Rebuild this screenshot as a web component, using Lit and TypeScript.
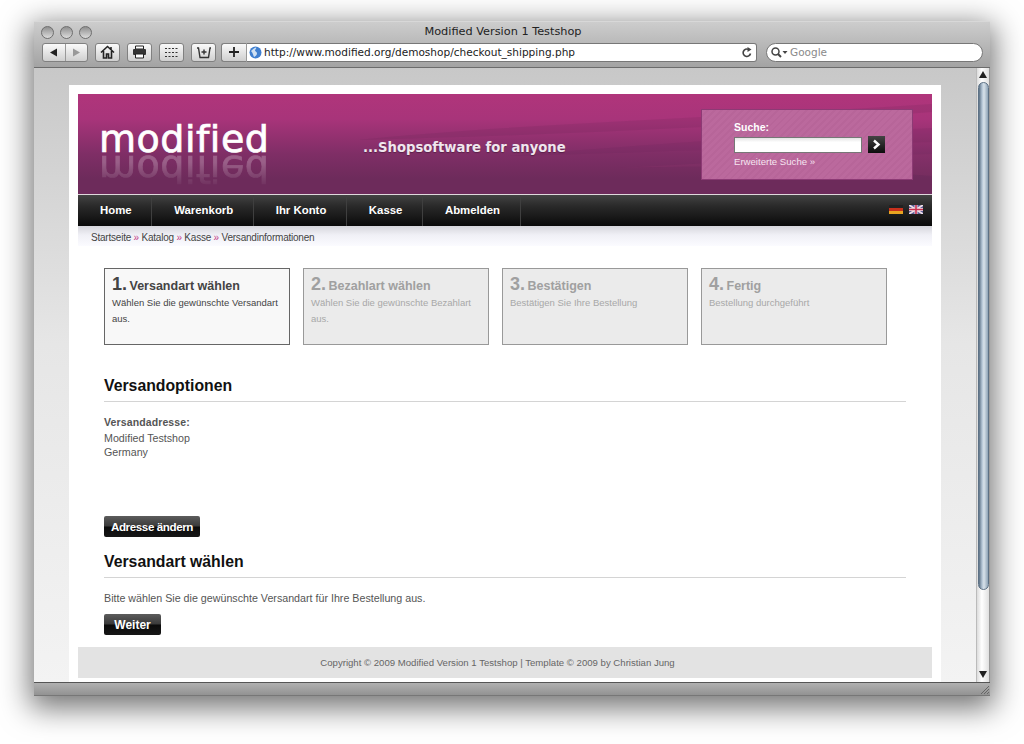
import { LitElement, html, css, svg } from "lit";
import { customElement } from "lit/decorators.js";

const steps = [
  { n: "1.", t: "Versandart wählen", d: "Wählen Sie die gewünschte Versandart aus.", on: true },
  { n: "2.", t: "Bezahlart wählen", d: "Wählen Sie die gewünschte Bezahlart aus.", on: false },
  { n: "3.", t: "Bestätigen", d: "Bestätigen Sie Ihre Bestellung", on: false },
  { n: "4.", t: "Fertig", d: "Bestellung durchgeführt", on: false },
];
const nav = ["Home", "Warenkorb", "Ihr Konto", "Kasse", "Abmelden"];

@customElement("app-root")
export class AppRoot extends LitElement {
  static styles = css`
    :host { display: block; width: 1024px; height: 744px; overflow: hidden; background: #fff; box-sizing: border-box; padding: 21px 0 0 34px; font-family: "Liberation Sans", Arial, sans-serif; }
    * { box-sizing: border-box; }
    .win { width: 956px; height: 675px; display: flex; flex-direction: column; box-shadow: 0 8px 28px 4px rgba(0,0,0,.55); }
    .chrome { height: 47px; flex: none; background: linear-gradient(#cdcdcd, #a3a3a3); border-bottom: 1px solid #6c6c6c; border-top: 1px solid #d8d8d8; position: relative; }
    .titlerow { height: 20px; display: flex; align-items: center; padding-left: 7px; gap: 6px; position: relative; }
    .light { width: 13px; height: 13px; border-radius: 50%; border: 1px solid #6e6e6e; background: linear-gradient(#8f8f8f, #dcdcdc); }
    .title { position: absolute; left: 0; right: 0; top: 3px; text-align: center; font: 11.3px "DejaVu Sans", sans-serif; color: #222; padding-right: 18px; }
    .toolrow { display: flex; align-items: center; height: 20px; padding-left: 8px; }
    .btn { height: 19px; border: 1px solid #808080; border-radius: 3px; background: linear-gradient(#fafafa, #cfcfcf); display: flex; align-items: center; justify-content: center; flex: none; }
    .back { width: 46px; padding: 0; gap: 0; margin-right: 7px; }
    .back span { flex: 1; height: 100%; display: flex; align-items: center; justify-content: center; }
    .back span + span { border-left: 1px solid #999; }
    .i1 { width: 25px; margin-right: 7px; }
    .i1.last { margin-right: 5px; }
    .add { width: 25px; border-radius: 3px 0 0 3px; border-right: none; }
    .url { width: 511px; height: 19px; background: #fff; border: 1px solid #777; border-left: 1px solid #999; border-radius: 0 3px 3px 0; display: flex; align-items: center; padding: 0 4px 0 2px; font: 10.55px "DejaVu Sans", sans-serif; color: #222; flex: none; gap: 2px; }
    .url .u { flex: 1; white-space: nowrap; }
    .search { width: 217px; height: 19px; margin-left: 9px; background: #fff; border: 1px solid #777; border-radius: 10px; display: flex; align-items: center; padding-left: 4px; gap: 2px; font: 10.5px "DejaVu Sans", sans-serif; color: #8a8a8a; flex: none; }
    .mid { flex: 1; display: flex; min-height: 0; }
    .view { width: 942px; background: linear-gradient(#c8c8c8, #e6e6e6 45%, #f3f3f3); padding: 17px 0 0 35px; overflow: hidden; }
    .page { width: 872px; height: 597px; background: #fff; padding: 9px 9px 0; }
    .head { height: 100px; background: linear-gradient(#b0357b, #a8347a 25%, #7f2e66 60%, #6d2b5b 85%); display: flex; align-items: flex-start; position: relative; overflow: hidden; }
    .streaks { position: absolute; inset: 0; width: 100%; height: 100%; }
    .logo { position: relative; margin: 23px 0 0 21px; width: 264px; font: 38px/44px "DejaVu Sans", sans-serif; color: #fff; letter-spacing: .5px; -webkit-text-stroke: .7px #fff; }
    .logo::after { content: "modified"; position: absolute; left: 0; top: 30px; color: #fff; transform: scaleY(-1); opacity: .24; -webkit-mask-image: linear-gradient(transparent 5%, #000 65%); mask-image: linear-gradient(transparent 5%, #000 65%); }
    .slogan { position: relative; margin-top: 44px; font: bold 13.2px/20px "DejaVu Sans", sans-serif; color: #f0e6ee; white-space: nowrap; width: 338px; text-shadow: 0 1px 1px rgba(0,0,0,.3); }
    .sbox { position: relative; margin-top: 15px; width: 212px; height: 71px; background: repeating-linear-gradient(135deg, #bb699d 0 3px, #b76599 3px 5px); border: 1px solid #8d3a75; padding: 11px 0 0 32px; color: #fff; font-size: 10px; }
    .sbox b { display: block; font-size: 10.5px; line-height: 12px; margin-bottom: 3px; }
    .srow { display: flex; align-items: center; gap: 6px; margin-bottom: 3px; }
    .sin { width: 128px; height: 16px; background: linear-gradient(#e4e4e4, #fff 30%); border: 1px solid #777; }
    .go { width: 17px; height: 17px; background: linear-gradient(#444, #0c0c0c); display: flex; align-items: center; justify-content: center; }
    .sbox a { font-size: 9.6px; line-height: 12px; color: #f6e4f0; display: block; }
    .nav { height: 32px; border-top: 1px solid #e0d8dc; background: linear-gradient(#434343, #2a2a2a 35%, #0a0a0a); display: flex; align-items: center; position: relative; }
    .nav a { height: 100%; padding: 0 19.5px 2px 22px; display: flex; align-items: center; border-right: 1px solid #3f3f3f; color: #fff; font-weight: bold; font-size: 11.4px; white-space: nowrap; }
    .flags { margin-left: auto; margin-right: 9px; display: flex; gap: 6px; padding-bottom: 2px; }
    .crumb { height: 20px; background: linear-gradient(#d6d6dc, #f0f0f6 45%, #fbfbff); padding: 1px 0 0 13px; font-size: 10px; line-height: 22px; color: #444; letter-spacing: -.22px; white-space: nowrap; overflow: hidden; }
    .crumb i { font-style: normal; color: #c33a86; }
    .content { padding: 22px 26px 0; }
    .steps { display: flex; gap: 13px; }
    .step { width: 186px; height: 77px; border: 1px solid #999; background: #ebebeb; padding: 5px 4px 5px 7px; color: #a8a8a8; font-size: 9.5px; line-height: 16px; }
    .step.on { border-color: #666; background: #f8f8f8; color: #444; }
    .step .t { display: block; font-size: 12.5px; font-weight: bold; line-height: 21px; color: #a0a0a0; white-space: nowrap; margin-bottom: -2px; }
    .step .t em { font-style: normal; font-size: 18px; margin-right: -1px; }
    .step.on .t { color: #444; }
    h2 { margin: 0; font-size: 15.8px; line-height: 20px; font-weight: bold; color: #111; padding-bottom: 5px; border-bottom: 1px solid #d4d4d4; }
    .h1 { margin-top: 31px; }
    .addr { margin-top: 13px; font-size: 10.7px; line-height: 13.5px; color: #555; }
    .addr b { display: block; font-size: 10.5px; line-height: 14px; margin-bottom: 3px; letter-spacing: .12px; }
    .cta { display: flex; align-items: center; justify-content: center; height: 21px; border-radius: 2px; background: linear-gradient(#5c5c5c, #3a3a3a 48%, #0b0b0b 52%, #161616); color: #fff; font-weight: bold; font-size: 12px; }
    .a1 { width: 96px; margin-top: 57px; font-size: 11.6px; letter-spacing: -.4px; }
    .h2 { margin-top: 15px; }
    p { margin: 14px 0 9px; font-size: 10.7px; line-height: 13px; color: #555; }
    .a2 { width: 57px; }
    .foot { margin-top: 12px; height: 31px; padding-right: 15px; background: #e3e3e3; text-align: center; font-size: 9.6px; line-height: 31px; color: #666; }
    .sb { width: 14px; background: linear-gradient(90deg, #dcdcdc, #fff 40%, #e0e0e0); border-left: 1px solid #bbb; border-right: 1px solid #999; display: flex; flex-direction: column; align-items: center; padding-top: 3px; }
    .thumb { width: 11px; height: 508px; margin-top: 4px; border-radius: 6px; background: linear-gradient(90deg, #5a6f83, #b5c6d6 35%, #d8e2ea 55%, #8ea3b6); border: 1px solid #5d7185; flex: none; }
    .arrow { flex: none; }
    .sp { flex: 1; }
    .ad { margin-bottom: 4px; }
    .status { height: 14px; flex: none; background: linear-gradient(#b0b0b0, #929292); border-top: 1px solid #555; border-bottom: 1px solid #777; position: relative; }
    .grip { position: absolute; right: 0; bottom: 0; }
  `;

  private streaks() {
    return svg`<svg class="streaks" viewBox="0 0 854 100" preserveAspectRatio="none">
      <path d="M280 46 C430 30 640 24 854 10 V18 C650 34 440 42 280 46Z" fill="#5e2350" opacity=".14"/>
      <path d="M430 62 C600 48 720 40 854 34 V48 C720 52 580 58 430 62Z" fill="#5e2350" opacity=".12"/>
      <path d="M540 74 C660 70 760 74 854 82 V60 C760 62 650 68 540 74Z" fill="#d04a92" opacity=".08"/>
    </svg>`;
  }

  render() {
    return html`<div class="win">
      <div class="chrome">
        <div class="titlerow">
          <span class="light"></span><span class="light"></span><span class="light"></span>
          <span class="title">Modified Version 1 Testshop</span>
        </div>
        <div class="toolrow">
          <div class="btn back">
            <span><svg width="9" height="9" viewBox="0 0 9 9"><path d="M1 4.500 8 .5v8z" fill="#222"/></svg></span>
            <span><svg width="9" height="9" viewBox="0 0 9 9"><path d="M8 4.500 1 .5v8z" fill="#999"/></svg></span>
          </div>
          <div class="btn i1"><svg width="15" height="14" viewBox="0 0 15 14"><path d="M1 7.500 7.500 1.500 14 7.500M3.500 6v7h3V9h2v4h3V6M11 2v2.500" fill="none" stroke="#222" stroke-width="1.600"/></svg></div>
          <div class="btn i1"><svg width="15" height="14" viewBox="0 0 15 14"><path d="M3.500 1h8v3h-8z" fill="#fff" stroke="#222"/><rect x="1" y="4" width="13" height="6" rx="1" fill="#333"/><path d="M3.500 9h8v4h-8z" fill="#fff" stroke="#222"/></svg></div>
          <div class="btn i1"><svg width="13" height="9" viewBox="0 0 13 9" fill="#333"><path d="M0 0h2v1H0zM3.500 0h2v1h-2zM7 0h2v1H7zM10.500 0h2v1h-2zM0 4h2v1H0zM3.500 4h2v1h-2zM7 4h2v1H7zM10.500 4h2v1h-2zM0 8h2v1H0zM3.500 8h2v1h-2zM7 8h2v1H7zM10.500 8h2v1h-2z"/></svg></div>
          <div class="btn i1 last"><svg width="16" height="13" viewBox="0 0 16 13"><path d="M1 2h1.500L4 11.500h8.500L14 2h1M8 3.500v5M5.500 6h5" fill="none" stroke="#333" stroke-width="1.400"/></svg></div>
          <div class="btn add"><svg width="10" height="10" viewBox="0 0 10 10"><path d="M5 0v10M0 5h10" stroke="#222" stroke-width="1.800"/></svg></div>
          <div class="url">
            <svg width="13" height="13" viewBox="0 0 13 13"><circle cx="6.500" cy="6.500" r="6" fill="#3f7fd0"/><path d="M2 5c2-2 3-3 5-3.500 1 1-1 2-1 3s2 1 2 3-2 3-3 3.500C4 9 4 7 2 5z" fill="#cfe0f2"/></svg>
            <span class="u">http://www.modified.org/demoshop/checkout_shipping.php</span>
            <svg width="10" height="11" viewBox="0 0 10 11"><path d="M8.500 6.500A3.700 3.700 0 1 1 6.500 2.400" fill="none" stroke="#444" stroke-width="1.600"/><path d="M5.500 0v5l4-2.500z" fill="#444"/></svg>
          </div>
          <div class="search">
            <svg width="17" height="11" viewBox="0 0 17 11"><circle cx="4.500" cy="4.500" r="3.500" fill="none" stroke="#444" stroke-width="1.500"/><path d="M7 7l3 3" stroke="#444" stroke-width="2"/><path d="M11.500 4h5l-2.500 3z" fill="#444"/></svg>
            <span>Google</span>
          </div>
        </div>
      </div>
      <div class="mid">
        <div class="view">
          <div class="page">
            <div class="head">
              ${this.streaks()}
              <div class="logo">modified</div>
              <div class="slogan">...Shopsoftware for anyone</div>
              <div class="sbox">
                <b>Suche:</b>
                <div class="srow"><div class="sin"></div><div class="go"><svg width="11" height="11" viewBox="0 0 11 11"><path d="M3 1.500 7.500 5.500 3 9.500" fill="none" stroke="#fff" stroke-width="2.400"/></svg></div></div>
                <a>Erweiterte Suche »</a>
              </div>
            </div>
            <div class="nav">
              ${nav.map((n) => html`<a>${n}</a>`)}
              <div class="flags">
                <svg width="14" height="9" viewBox="0 0 14 9"><rect width="14" height="3" fill="#222"/><rect y="3" width="14" height="3" fill="#c8301c"/><rect y="6" width="14" height="3" fill="#e8a420"/></svg>
                <svg width="14" height="9" viewBox="0 0 14 9"><rect width="14" height="9" fill="#5a5f9a"/><path d="M0 0l14 9M14 0 0 9" stroke="#f0e0e6" stroke-width="1.800"/><path d="M7 0v9M0 4.500h14" stroke="#f0e0e6" stroke-width="3"/><path d="M7 0v9M0 4.500h14" stroke="#c83050" stroke-width="1.600"/></svg>
              </div>
            </div>
            <div class="crumb">Startseite <i>»</i> Katalog <i>»</i> Kasse <i>»</i> Versandinformationen</div>
            <div class="content">
              <div class="steps">
                ${steps.map((s) => html`<div class="step ${s.on ? "on" : ""}">
                  <span class="t"><em>${s.n}</em> ${s.t}</span>${s.d}
                </div>`)}
              </div>
              <h2 class="h1">Versandoptionen</h2>
              <div class="addr"><b>Versandadresse:</b>Modified Testshop<br />Germany</div>
              <div class="cta a1">Adresse ändern</div>
              <h2 class="h2">Versandart wählen</h2>
              <p>Bitte wählen Sie die gewünschte Versandart für Ihre Bestellung aus.</p>
              <div class="cta a2">Weiter</div>
            </div>
            <div class="foot">Copyright © 2009 Modified Version 1 Testshop | Template © 2009 by Christian Jung</div>
          </div>
        </div>
        <div class="sb">
          <svg class="arrow" width="8" height="7" viewBox="0 0 8 7"><path d="M4 0 8 7H0z" fill="#222"/></svg>
          <div class="thumb"></div>
          <div class="sp"></div>
          <svg class="arrow ad" width="8" height="7" viewBox="0 0 8 7"><path d="M4 7 8 0H0z" fill="#222"/></svg>
        </div>
      </div>
      <div class="status">
        <svg class="grip" width="12" height="12" viewBox="0 0 12 12"><path d="M11 3 3 11M11 6 6 11M11 9 9 11" stroke="#666" stroke-width="1"/></svg>
      </div>
    </div>`;
  }
}
